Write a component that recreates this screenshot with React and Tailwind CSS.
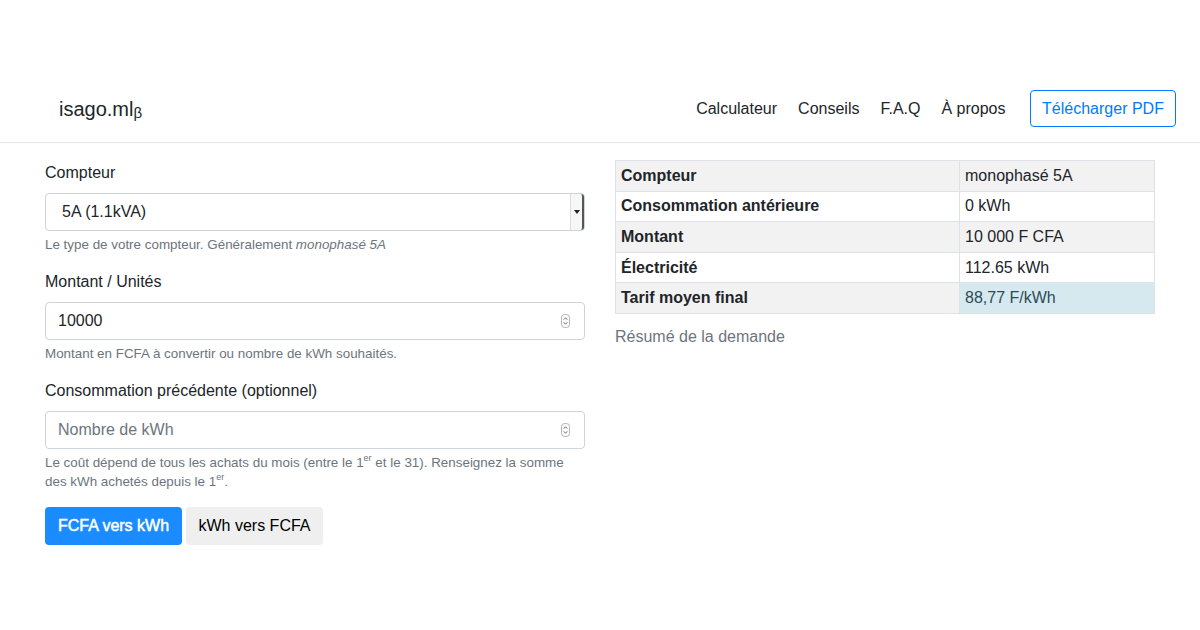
import React from "react";

const Spinner = () => (
  <svg width="9" height="14" viewBox="0 0 9 14" className="shrink-0">
    <rect x="0.5" y="0.5" width="8" height="13" rx="3" fill="#fafafa" stroke="#b5b5b5" />
    <path d="M2.8 5.6 L4.5 3.8 L6.2 5.6" fill="none" stroke="#555" strokeWidth="0.9" />
    <path d="M2.8 8.4 L4.5 10.2 L6.2 8.4" fill="none" stroke="#555" strokeWidth="0.9" />
  </svg>
);

const rows = [
  { label: "Compteur", value: "monophasé 5A", bg: "bg-[#f2f2f2]" },
  { label: "Consommation antérieure", value: "0 kWh", bg: "bg-white" },
  { label: "Montant", value: "10 000 F CFA", bg: "bg-[#f2f2f2]" },
  { label: "Électricité", value: "112.65 kWh", bg: "bg-white" },
];

const App = () => {
  return (
    <div className="w-[1200px] h-[630px] bg-white text-[#212529] font-['Liberation_Sans',Arial,sans-serif] text-base">
      <div className="h-[75px]"></div>

      {/* Navbar */}
      <nav className="h-[68px] border-b border-[#e5e5e5] flex items-center pl-[59px] pr-[24px]">
        <div className="text-[20px] leading-none text-[#212529]">
          isago.ml<sub className="text-[15px] relative top-[2px]">β</sub>
        </div>
        <div className="ml-auto flex items-center">
          {["Calculateur", "Conseils", "F.A.Q", "À propos"].map((item) => (
            <a key={item} className="px-[10.5px] text-[16px] text-[#212529]">
              {item}
            </a>
          ))}
          <button className="ml-[14px] h-[37px] w-[146px] border border-[#007bff] rounded-[4px] text-[#007bff] text-[16px]">
            Télécharger PDF
          </button>
        </div>
      </nav>

      <div className="flex px-[45px] pt-[17px] gap-[30px]">
        {/* Left column: form */}
        <form className="w-[540px] pt-[1px]">
          <div className="mb-[16px]">
            <label className="block leading-6 mb-[8px]">Compteur</label>
            <div className="h-[38px] border border-[#ced4da] rounded-[4px] flex items-center pl-[16px] relative">
              <span>5A (1.1kVA)</span>
              <div className="ml-auto h-full w-[14px] border-l border-[#dcdcdc] bg-[#f7f7f7] flex items-center justify-center border-r-2 border-r-[#555] rounded-r-[3px]">
                <svg width="6" height="4" viewBox="0 0 6 4">
                  <path d="M0 0 L6 0 L3 4 Z" fill="#222" />
                </svg>
              </div>
            </div>
            <p className="mt-[4px] text-[13.4px] leading-[19px] text-[#6c757d]">
              Le type de votre compteur. Généralement <em>monophasé 5A</em>
            </p>
          </div>

          <div className="mb-[16px]">
            <label className="block leading-6 mb-[8px]">Montant / Unités</label>
            <div className="h-[38px] border border-[#ced4da] rounded-[4px] flex items-center pl-[12px] pr-[14px]">
              <span>10000</span>
              <span className="ml-auto"><Spinner /></span>
            </div>
            <p className="mt-[4px] text-[13.4px] leading-[19px] text-[#6c757d]">
              Montant en FCFA à convertir ou nombre de kWh souhaités.
            </p>
          </div>

          <div className="mb-[16px]">
            <label className="block leading-6 mb-[8px]">Consommation précédente (optionnel)</label>
            <div className="h-[38px] border border-[#ced4da] rounded-[4px] flex items-center pl-[12px] pr-[14px]">
              <span className="text-[#6c757d]">Nombre de kWh</span>
              <span className="ml-auto"><Spinner /></span>
            </div>
            <p className="mt-[4px] text-[13.4px] leading-[19px] text-[#6c757d] w-[530px]">
              Le coût dépend de tous les achats du mois (entre le 1<sup className="text-[9px] leading-none align-baseline relative top-[-6px]">er</sup> et le 31). Renseignez la somme des kWh achetés depuis le 1<sup className="text-[9px] leading-none align-baseline relative top-[-6px]">er</sup>.
            </p>
          </div>

          <div className="flex gap-[4px]">
            <button type="button" className="h-[38px] w-[137px] rounded-[4px] bg-[#1a8cff] text-white [-webkit-text-stroke:0.5px_white]">
              FCFA vers kWh
            </button>
            <button type="button" className="h-[38px] w-[137px] rounded-[4px] bg-[#efefef] text-black">
              kWh vers FCFA
            </button>
          </div>
        </form>

        {/* Right column: summary table */}
        <div className="w-[540px]">
          <table className="w-full border-collapse border border-[#dee2e6]">
            <tbody>
              {rows.map((r) => (
                <tr key={r.label} className={r.bg}>
                  <td className="w-[344px] border border-[#dee2e6] px-[5px] py-[2.8px] leading-6 font-bold">{r.label}</td>
                  <td className="border border-[#dee2e6] px-[5px] py-[2.8px] leading-6">{r.value}</td>
                </tr>
              ))}
              <tr>
                <td className="border border-[#dee2e6] px-[5px] py-[2.8px] leading-6 font-bold bg-[#f2f2f2]">Tarif moyen final</td>
                <td className="border border-[#dee2e6] px-[5px] py-[2.8px] leading-6 bg-[#d6e9ef] text-[#2d4c56]">88,77 F/kWh</td>
              </tr>
            </tbody>
          </table>
          <p className="pt-[11px] text-[#6c757d] leading-6">Résumé de la demande</p>
        </div>
      </div>
    </div>
  );
};

export default App;
